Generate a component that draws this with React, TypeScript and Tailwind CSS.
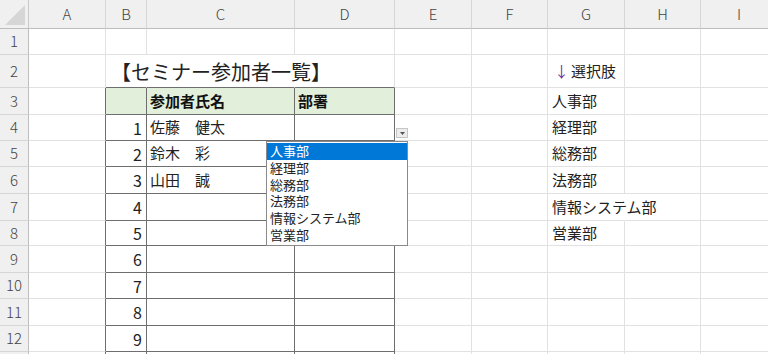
import type { ReactNode } from "react"

const font = { fontFamily: '"Noto Sans CJK JP", "Noto Sans", sans-serif' }

const colNames = ["A", "B", "C", "D", "E", "F", "G", "H", "I"]

// heights of rows 1..13
const rowH = [
  "h-[26px]",
  "h-[33px]",
  "h-[27px]",
  "h-[26px]",
  "h-[26px]",
  "h-[27px]",
  "h-[27px]",
  "h-[25px]",
  "h-[27px]",
  "h-[26px]",
  "h-[27px]",
  "h-[26px]",
  "h-[26px]",
]

const names: Record<number, string> = {
  4: "佐藤　健太",
  5: "鈴木　彩",
  6: "山田　誠",
}

const choices = ["人事部", "経理部", "総務部", "法務部", "情報システム部", "営業部"]

function Cell({ row, col, children, className = "" }: { row: number; col: number; children?: ReactNode; className?: string }) {
  // col: 0 = A ... 8 = I
  const inTable = row >= 3
  let right = "border-r-[#e1e1e1]"
  if (inTable && col <= 3) right = "border-r-[#6e6e6e]"
  if (row === 2 && (col === 1 || col === 2)) right = "border-r-transparent"
  if (row === 7 && col === 6) right = "border-r-transparent"
  const bottom = row >= 2 && col >= 1 && col <= 3 ? "border-b-[#6e6e6e]" : "border-b-[#e1e1e1]"
  const fill = row === 3 && col >= 1 && col <= 3 ? "bg-[#e2efda]" : ""
  return (
    <div className={`flex items-center border-r border-b ${right} ${bottom} ${fill} ${className}`}>
      {children}
    </div>
  )
}

function renderCell(row: number, col: number) {
  // last row is only a sliver at the bottom edge
  if (row === 13) return <Cell key={col} row={row} col={col} />
  if (row === 2 && col === 1) {
    return (
      <Cell key={col} row={row} col={col}>
        <span className="relative z-10 ml-[5px] whitespace-nowrap pt-[1px] text-[20px] text-[#222]">【セミナー参加者一覧】</span>
      </Cell>
    )
  }
  if (row === 3 && col === 2) {
    return (
      <Cell key={col} row={row} col={col} className="pl-[3px] text-[15px] font-bold text-[#111]">
        <span>参加者氏名</span>
      </Cell>
    )
  }
  if (row === 3 && col === 3) {
    return (
      <Cell key={col} row={row} col={col} className="pl-[3px] text-[15px] font-bold text-[#111]">
        <span>部署</span>
      </Cell>
    )
  }
  if (row >= 4 && col === 1) {
    return (
      <Cell key={col} row={row} col={col} className="justify-end pr-[4px] text-[16px] text-[#222]">
        <span>{row - 3}</span>
      </Cell>
    )
  }
  if (col === 2 && names[row]) {
    return (
      <Cell key={col} row={row} col={col} className="pl-[3px] text-[15px] text-[#222]">
        <span className="whitespace-pre">{names[row]}</span>
      </Cell>
    )
  }
  if (row === 2 && col === 6) {
    return (
      <Cell key={col} row={row} col={col} className="pl-[6px] text-[15px] text-[#222]">
        <span>
          <span className="mr-[2px] text-[#7030a0]">↓</span>選択肢
        </span>
      </Cell>
    )
  }
  if (col === 6 && row >= 3 && row <= 8) {
    return (
      <Cell key={col} row={row} col={col} className="pl-[4px] text-[15px] text-[#222]">
        <span className="relative z-10 whitespace-nowrap">{choices[row - 3]}</span>
      </Cell>
    )
  }
  return <Cell key={col} row={row} col={col} />
}

export default function App() {
  return (
    <div className="relative h-[354px] w-[768px] overflow-hidden bg-white" style={font}>
      {/* column letters */}
      <div className="grid h-[29px] w-[778px] grid-cols-[29px_77px_41px_148px_100px_77px_76px_77px_76px_77px] bg-[#f0f0f0]">
        <div className="relative border-r border-b border-r-[#c8c8c8] border-b-[#bdbdbd]">
          <svg className="absolute right-[3px] bottom-[3px]" width="20" height="20" viewBox="0 0 20 20">
            <polygon points="20,0 20,20 0,20" fill="#d6d6d6" />
          </svg>
        </div>
        {colNames.map((c) => (
          <div
            key={c}
            className="flex items-center justify-center border-r border-b border-r-[#d6d6d6] border-b-[#bdbdbd] text-[15px] font-light text-[#444]"
          >
            {c}
          </div>
        ))}
      </div>

      {/* sheet rows */}
      {rowH.map((h, i) => {
        const row = i + 1
        return (
          <div key={row} className={`grid w-[778px] grid-cols-[29px_77px_41px_148px_100px_77px_76px_77px_76px_77px] ${h}`}>
            <div className="flex items-center justify-center border-r border-b border-r-[#bdbdbd] border-b-[#d6d6d6] bg-[#f0f0f0] text-[15px] font-light text-[#444]">
              {row < 13 ? row : null}
            </div>
            {colNames.map((_, col) => renderCell(row, col))}
          </div>
        )
      })}

      {/* validation dropdown on D4 */}
      <div className="absolute top-[128px] left-[396px] flex h-[10px] w-[12px] items-center justify-center border border-[#c6c6c6] bg-[#ececec]">
        <svg width="5" height="3" viewBox="0 0 5 3">
          <polygon points="0,0 5,0 2.5,3" fill="#555" />
        </svg>
      </div>
      <div className="absolute top-[141px] left-[266px] flex w-[142px] flex-col border border-[#8a8a8a] bg-white py-[1px] text-[13px] leading-[16.8px] text-[#222]">
        {choices.map((c, i) => (
          <div key={c} className={i === 0 ? "bg-[#0078d7] pl-[3px] text-white" : "pl-[3px]"}>
            {c}
          </div>
        ))}
      </div>
    </div>
  )
}
